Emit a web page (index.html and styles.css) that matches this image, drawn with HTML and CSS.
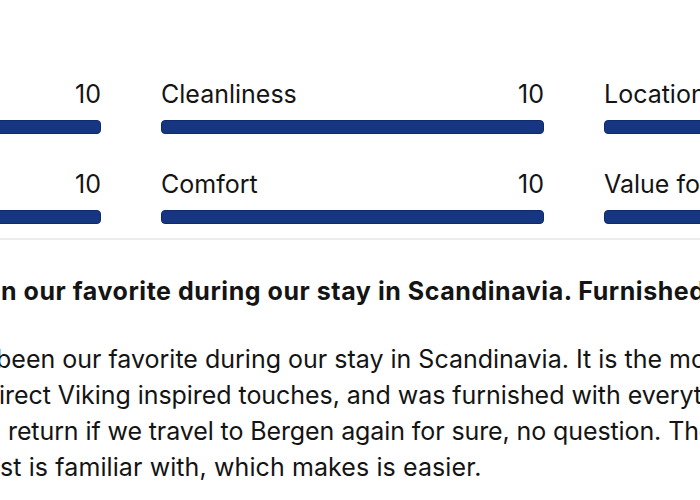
FILE: index.html
```html
<!DOCTYPE html>
<html lang="en">
<head>
<meta charset="utf-8">
<title>Review scores</title>
<link rel="stylesheet" href="styles.css">
</head>
<body>
<div class="page">
  <section class="scores">
    <div class="score">
      <div class="score-head"><span class="label">Staff</span><span class="value">10</span></div>
      <div class="bar"></div>
    </div>
    <div class="score">
      <div class="score-head"><span class="label">Cleanliness</span><span class="value">10</span></div>
      <div class="bar"></div>
    </div>
    <div class="score">
      <div class="score-head"><span class="label">Location</span><span class="value">10</span></div>
      <div class="bar"></div>
    </div>
    <div class="score">
      <div class="score-head"><span class="label">Facilities</span><span class="value">10</span></div>
      <div class="bar"></div>
    </div>
    <div class="score">
      <div class="score-head"><span class="label">Comfort</span><span class="value">10</span></div>
      <div class="bar"></div>
    </div>
    <div class="score">
      <div class="score-head"><span class="label">Value for money</span><span class="value">10</span></div>
      <div class="bar"></div>
    </div>
  </section>
  <section class="review">
    <h3 class="review-title">n our favorite during our stay in Scandinavia. Furnished with Viking touches</h3>
    <div class="review-body">
      <div class="line l1">been our favorite during our stay in Scandinavia. It is the most unique</div>
      <div class="line l2">irect Viking inspired touches, and was furnished with everything</div>
      <div class="line l3">return if we travel to Bergen again for sure, no question. The</div>
      <div class="line l4">st is familiar with, which makes is easier.</div>
    </div>
  </section>
</div>
</body>
</html>
```
FILE: styles.css
```css
html, body {
  margin: 0;
  padding: 0;
  background: #ffffff;
}
body {
  width: 700px;
  height: 500px;
  overflow: hidden;
  font-family: Inter, "Liberation Sans", sans-serif;
  color: #141414;
}
.page {
  width: 700px;
  overflow: hidden;
}
.scores {
  display: grid;
  grid-template-columns: repeat(3, 383px);
  column-gap: 60px;
  row-gap: 35px;
  margin-left: -282px;
  width: 1271px;
  padding-top: 79px;
  padding-bottom: 14px;
  border-bottom: 2px solid #ececec;
}
.score-head {
  display: flex;
  justify-content: space-between;
  font-size: 25px;
  line-height: 30px;
  height: 30px;
}
.bar {
  margin-top: 11px;
  height: 14px;
  box-sizing: border-box;
  background: #173681;
  border: 1px solid #0f2a6a;
  border-radius: 4px;
}
.review-title {
  margin: 0 0 0 1px;
  padding-top: 36px;
  font-size: 25px;
  line-height: 30px;
  font-weight: 700;
  letter-spacing: 0.55px;
  white-space: nowrap;
}
.review-body {
  margin-top: 35px;
  font-size: 25px;
  line-height: 36px;
}
.line {
  white-space: nowrap;
}
.l1 { margin-left: -4px; }
.l2 { margin-left: -1px; letter-spacing: -0.05px; }
.l3 { margin-left: 8px; letter-spacing: -0.1px; }
.l4 { margin-left: 0; letter-spacing: 0.1px; }
```
